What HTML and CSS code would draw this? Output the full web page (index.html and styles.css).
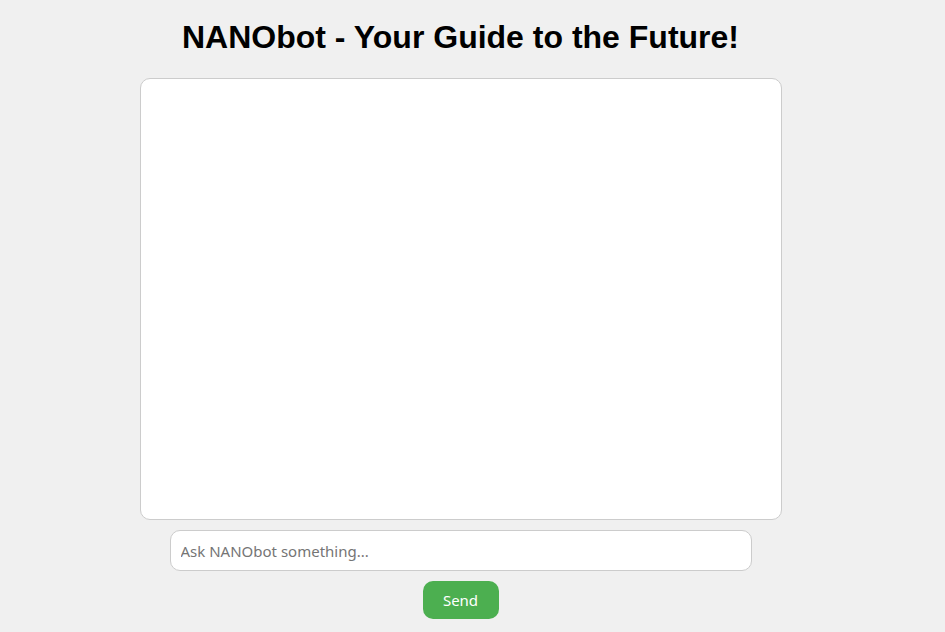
FILE: index.html
```html
<!DOCTYPE html>
<html>
<head>
    <title>NANObot</title>
    <link rel="stylesheet" href="styles.css">
</head>
<body>
    <div class="page">
        <h1>NANObot - Your Guide to the Future!</h1>

        <div id="chatBox" class="chat-box"></div>

        <input type="text" id="userInput" class="chat-input" placeholder="Ask NANObot something...">

        <button id="sendButton" class="send-button">Send</button>
    </div>
</body>
</html>
```

FILE: styles.css
```css
body {
    margin: 0;
    background-color: #f0f0f0;
    font-family: "Liberation Sans", Arial, sans-serif;
}
.page {
    width: 921px;
    padding-top: 19px;
    display: flex;
    flex-direction: column;
    align-items: center;
}
h1 {
    margin: 0 0 22px;
    font-size: 32px;
    line-height: 37px;
    font-weight: bold;
    color: #000;
}
.chat-box {
    box-sizing: border-box;
    width: 642px;
    height: 442px;
    background-color: white;
    border: 1px solid #ccc;
    border-radius: 10px;
    overflow-y: auto;
}
.chat-input {
    box-sizing: border-box;
    width: 582px;
    height: 41px;
    margin-top: 10px;
    padding: 0 10px;
    border: 1px solid #ccc;
    border-radius: 10px;
    background-color: white;
    font-family: "Noto Sans", sans-serif;
    font-size: 15px;
}
.chat-input::placeholder {
    color: #757575;
}
.send-button {
    box-sizing: border-box;
    width: 76px;
    height: 38px;
    margin-top: 10px;
    background-color: #4CAF50;
    color: white;
    border: none;
    border-radius: 10px;
    font-family: "Noto Sans", sans-serif;
    font-size: 15px;
    cursor: pointer;
}
```
